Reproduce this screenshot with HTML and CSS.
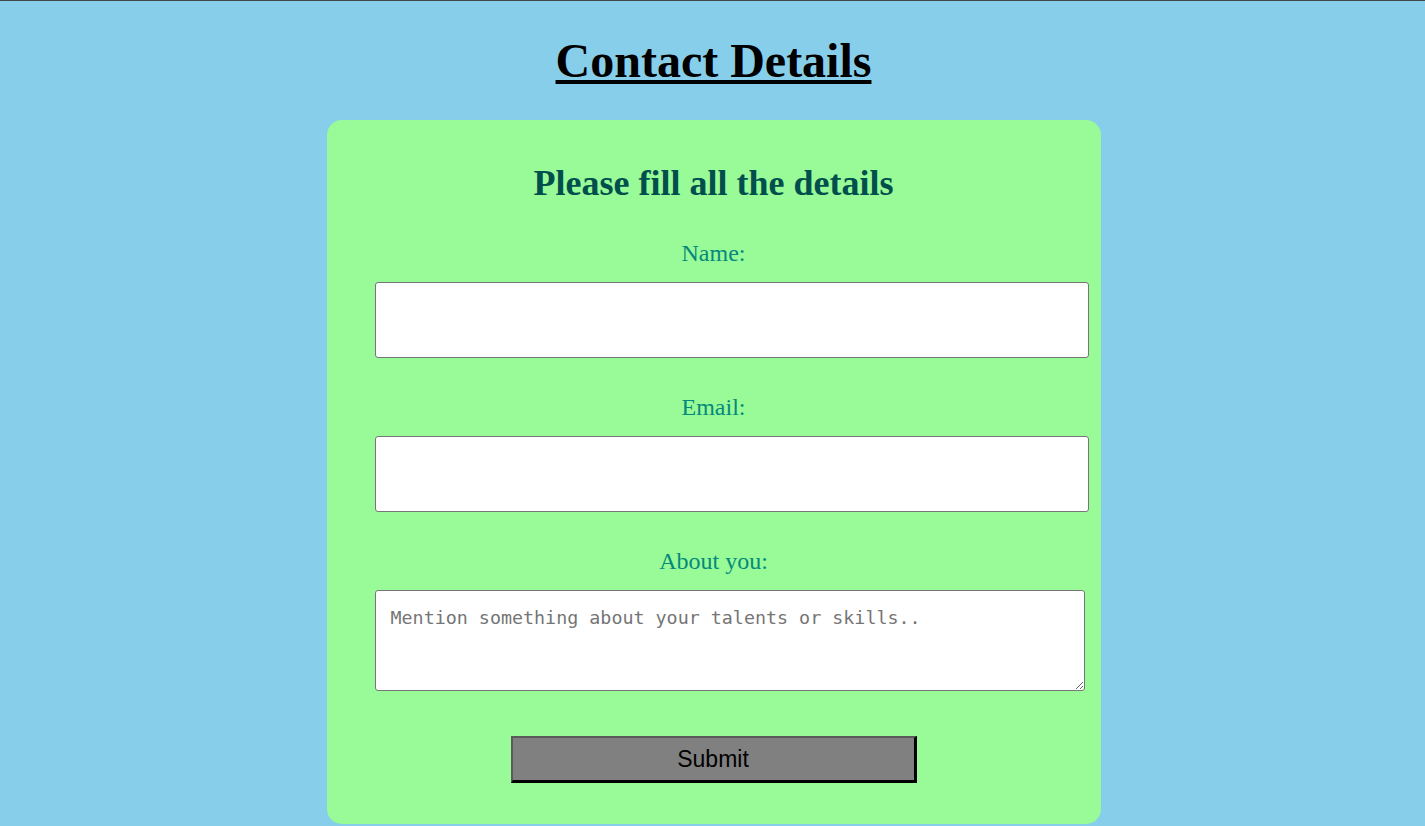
FILE: index.html
```html
<!DOCTYPE html>
<html lang="en">
<head>
<meta charset="utf-8">
<title>Contact Details</title>
<link rel="stylesheet" href="styles.css">
</head>
<body>
<h1 class="title">Contact Details</h1>
<form class="card">
  <h2 class="subtitle">Please fill all the details</h2>
  <label class="label" for="name">Name:</label>
  <input class="field" id="name" type="text">
  <label class="label" for="email">Email:</label>
  <input class="field" id="email" type="email">
  <label class="label" for="about">About you:</label>
  <textarea class="area" id="about" placeholder="Mention something about your talents or skills.."></textarea>
  <button class="submit" type="submit">Submit</button>
</form>
</body>
</html>
```

FILE: styles.css
```css
html, body {
  margin: 0;
  padding: 0;
}
body {
  background: #87ceeb;
  border-top: 1px solid #41474b;
  padding-left: 2px;
  font-family: "Liberation Serif", "Times New Roman", serif;
  min-height: 825px;
}
.title {
  margin: 33px 0 33px;
  font-size: 48px;
  line-height: 53px;
  font-weight: bold;
  text-align: center;
  text-decoration: underline;
  color: #000;
}
.card {
  width: 774px;
  box-sizing: border-box;
  margin: 0 auto;
  padding: 43px 48px 41px;
  background: #98fb98;
  border-radius: 15px;
  text-align: center;
}
.subtitle {
  margin: 0 0 37px;
  font-size: 36px;
  line-height: 40px;
  font-weight: bold;
  color: #014f4c;
}
.label {
  display: block;
  font-size: 24px;
  line-height: 27px;
  color: #05897a;
}
.field {
  display: block;
  box-sizing: border-box;
  width: 714px;
  height: 76px;
  margin: 15px 0 36px;
  padding: 0 15px;
  background: #fff;
  border: 1px solid #767676;
  border-radius: 3px;
  font-size: 18px;
  font-family: "Liberation Sans", Arial, sans-serif;
}
.area {
  display: block;
  box-sizing: border-box;
  width: 710px;
  height: 101px;
  margin: 15px 0 0;
  padding: 16px 14px 15px 15px;
  background: #fff;
  border: 1px solid #767676;
  border-radius: 3px;
  font-family: "DejaVu Sans Mono", monospace;
  font-size: 18.35px;
  line-height: 21px;
  resize: both;
}
.area::placeholder {
  color: #757575;
}
.submit {
  display: block;
  box-sizing: border-box;
  width: 406px;
  height: 47px;
  margin: 45px auto 0;
  padding: 0;
  background: #808080;
  border-style: solid;
  border-width: 2px 3px 3px 2px;
  border-color: #5a5a5a #000 #000 #5a5a5a;
  font-family: "Liberation Sans", Arial, sans-serif;
  font-size: 23px;
  color: #000;
}
```
